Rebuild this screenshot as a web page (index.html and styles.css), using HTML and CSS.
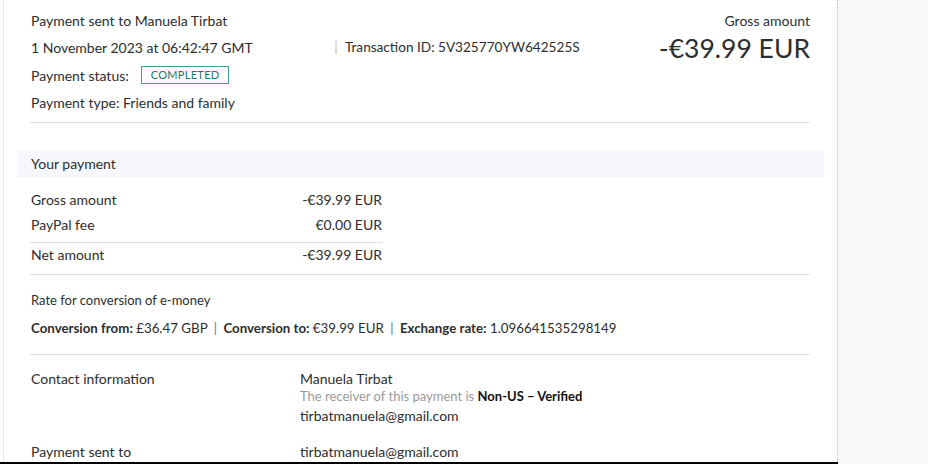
FILE: index.html
```html
<!DOCTYPE html>
<html lang="en">
<head>
<meta charset="utf-8">
<title>Payment details</title>
<link rel="stylesheet" href="styles.css">
</head>
<body>
<div class="page">
  <div class="frame">
    <main class="panel">
      <section class="header">
        <div class="head-left">
          <div class="hrow r1">Payment sent to Manuela Tirbat</div>
          <div class="hrow r2">1 November 2023 at 06:42:47 GMT</div>
          <div class="hrow r3">Payment status: <span class="badge">COMPLETED</span></div>
          <div class="hrow r4">Payment type: Friends and family</div>
        </div>
        <div class="head-mid">
          <span class="txid">Transaction ID: 5V325770YW642525S</span>
        </div>
        <div class="head-right">
          <div class="gross-label">Gross amount</div>
          <div class="gross-value">-€39.99 EUR</div>
        </div>
      </section>

      <section class="payment">
        <div class="bar">Your payment</div>
        <div class="amounts">
          <div class="arow gross"><span>Gross amount</span><span>-€39.99 EUR</span></div>
          <div class="arow fee"><span>PayPal fee</span><span>€0.00 EUR</span></div>
          <div class="arow net"><span>Net amount</span><span>-€39.99 EUR</span></div>
        </div>
      </section>

      <section class="rate">
        <div class="rate-title">Rate for conversion of e-money</div>
        <div class="rate-line"><b>Conversion from:</b> £36.47 GBP <span class="pipe">|</span> <b>Conversion to:</b> €39.99 EUR <span class="pipe">|</span> <b>Exchange rate:</b> 1.096641535298149</div>
      </section>

      <section class="contact">
        <div class="crow first">
          <div class="clabel">Contact information</div>
          <div class="cvalue">
            <div class="cname">Manuela Tirbat</div>
            <div class="cstatus">The receiver of this payment is <b>Non-US – Verified</b></div>
            <div class="cemail">tirbatmanuela@gmail.com</div>
          </div>
        </div>
        <div class="crow second">
          <div class="clabel">Payment sent to</div>
          <div class="cvalue">tirbatmanuela@gmail.com</div>
        </div>
      </section>
    </main>
  </div>
  <aside class="side"></aside>
</div>
</body>
</html>
```

FILE: styles.css
```css
* { box-sizing: border-box; }
html, body { margin: 0; padding: 0; }
body {
  font-family: Lato, "Liberation Sans", sans-serif;
  color: #2c2e2f;
  background: #f8f8f8;
  font-size: 14px;
}
.page {
  display: flex;
  height: 464px;
  overflow: hidden;
}
.frame {
  width: 838px;
  flex: none;
  height: 464px;
  padding-left: 3px;
  background: #fff;
  border-bottom: 2px solid #000;
}
.panel {
  width: 835px;
  height: 462px;
  background: #fff;
  border-left: 1px solid #e6e6e6;
  border-right: 1px dotted #bdbdbd;
  padding: 0 27px 0 27px;
  overflow: hidden;
}
.side { flex: 1; background: #f8f8f8; }

/* header */
.header {
  display: flex;
  padding-top: 7px;
  border-bottom: 1px dotted #c4c4c4;
  padding-bottom: 5px;
}
.head-left { width: 304px; flex: none; }
.hrow { line-height: 27px; height: 27px; }
.hrow.r3 { height: 28px; display: flex; align-items: center; }
.hrow.r4 { height: 28px; }
.badge {
  display: inline-block;
  margin-left: 12px;
  border: 1px solid #3aa195;
  color: #1d7568;
  font-size: 11px;
  letter-spacing: 0.3px;
  line-height: 16px;
  padding: 0 9px;
}
.head-mid { padding-top: 27px; }
.txid {
  display: inline-block;
  border-left: 2px solid #dadada;
  padding-left: 8px;
  line-height: 13px;
  margin-top: 7px;
  font-size: 13.6px;
}
.head-right { flex: 1; text-align: right; }
.gross-label { line-height: 27px; }
.gross-value { font-size: 26.5px; line-height: 28px; }

/* your payment */
.payment { padding-top: 27px; border-bottom: 1px dotted #c4c4c4; }
.bar {
  background: #f5f7fa;
  margin: 0 -14px;
  padding: 0 14px;
  height: 27px;
  line-height: 27px;
}
.amounts { width: 351px; margin-top: 10px; }
.arow { display: flex; justify-content: space-between; }
.arow.gross { line-height: 26px; height: 26px; }
.arow.fee { line-height: 24px; padding-bottom: 5px; border-bottom: 1px dotted #c4c4c4; }
.arow.net { line-height: 23px; height: 31px; }

/* rate */
.rate { padding-top: 12px; padding-bottom: 11px; border-bottom: 1px dotted #c4c4c4; }
.rate-title { font-size: 13px; line-height: 26px; }
.rate-line { font-size: 13.3px; line-height: 30px; }
.rate-line b { font-weight: 700; }
.pipe { color: #777; margin: 0 3px; }

/* contact */
.contact { padding-top: 13px; }
.crow { display: flex; }
.clabel { width: 269px; flex: none; }
.cname { line-height: 22px; }
.cstatus { line-height: 13px; font-size: 13px; color: #9a9a9a; }
.cstatus b { color: #111; font-weight: 700; }
.cemail { line-height: 26px; }
.crow.first .clabel { line-height: 22px; }
.crow.second { margin-top: 10px; line-height: 26px; }
```
